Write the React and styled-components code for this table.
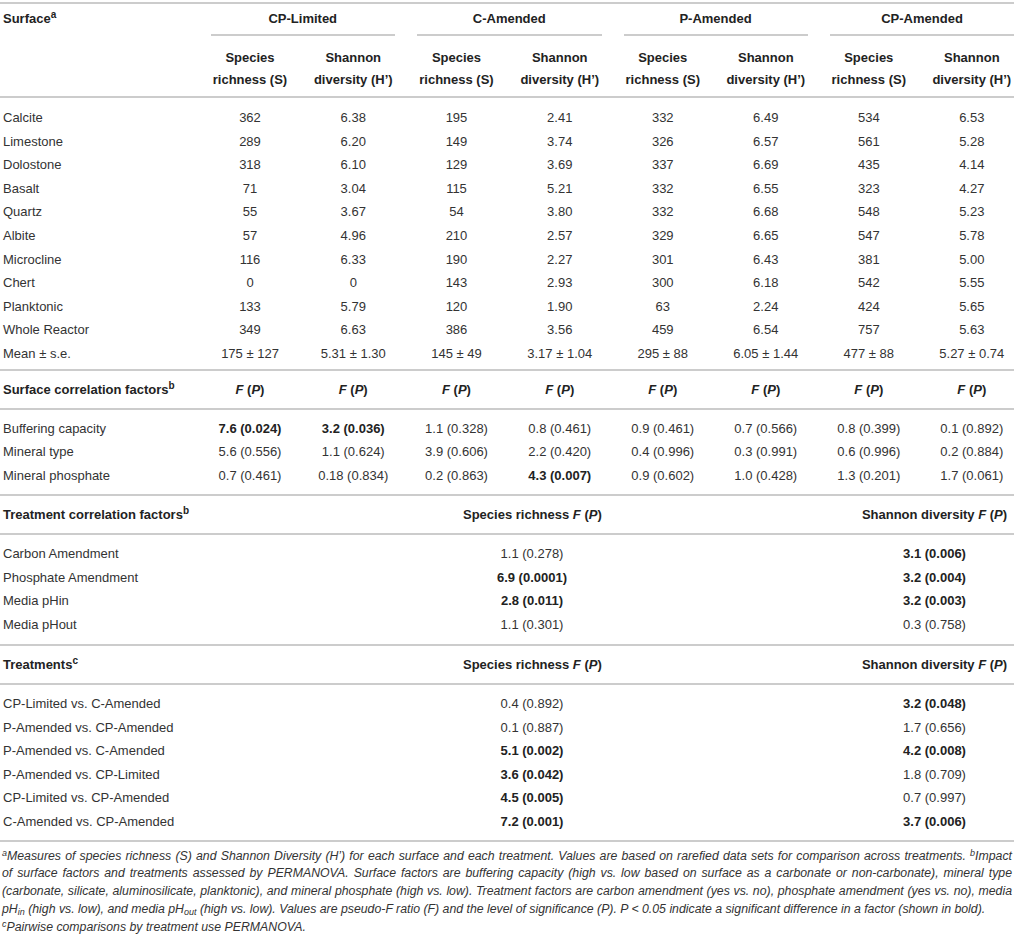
import React from "react";
import styled, { createGlobalStyle } from "styled-components";

const GlobalStyle = createGlobalStyle`
  html, body { margin: 0; padding: 0; background: #fff; }
  body {
    font-family: "Liberation Sans", Arial, Helvetica, sans-serif;
    color: #333;
    -webkit-font-smoothing: antialiased;
  }
`;

const LINE = "#cccccc";

const Page = styled.div`
  width: 1014px;
  padding-top: 2px;
`;

const Table = styled.table`
  width: 1014px;
  border-collapse: collapse;
  table-layout: fixed;
  border-top: 2px solid ${LINE};
  font-size: 13px;
`;

const GroupTh = styled.th`
  padding: 0 ${(p) => (p.$last ? 0 : 11)}px 0 11px;
  font-weight: bold;
  color: #222;
  text-align: center;
  vertical-align: top;
`;

const GroupLabel = styled.div`
  line-height: 16px;
  padding: 7px 0;
  border-bottom: 2px solid ${LINE};
`;

const CornerTh = styled.th`
  padding: 7px 0 0 3px;
  line-height: 16px;
  text-align: left;
  vertical-align: top;
  font-weight: bold;
  color: #222;
  border-bottom: 2px solid ${LINE};
`;

const SubTh = styled.th`
  padding: 11px ${(p) => (p.$last ? 1 : 11)}px 5px 11px;
  line-height: 22px;
  text-align: center;
  font-weight: bold;
  color: #222;
  border-bottom: 2px solid ${LINE};
`;

const Sup = styled.sup`
  font-size: 10px;
  line-height: 0;
  vertical-align: 5px;
  font-weight: bold;
`;

const SectionRow = styled.tr`
  border-bottom: 2px solid ${LINE};
  border-top: ${(p) => (p.$ruled ? `2px solid ${LINE}` : "none")};
`;

const SectionTh = styled.th`
  padding-top: 7px;
  padding-bottom: 6px;
  padding-right: ${(p) => (p.$last ? 1 : p.$label ? 0 : 11)}px;
  padding-left: ${(p) => (p.$padLeft != null ? p.$padLeft : p.$label ? 3 : 11)}px;
  line-height: 23.6px;
  text-align: ${(p) => (p.$label ? "left" : "center")};
  font-weight: bold;
  color: #222;
  white-space: nowrap;
`;

const Row = styled.tr`
  & > td {
    padding-top: ${(p) => p.$padTop || 0}px;
    padding-bottom: ${(p) => p.$padBottom || 0}px;
  }
`;

const Td = styled.td`
  padding-left: ${(p) => (p.$padLeft != null ? p.$padLeft : p.$label ? 3 : 11)}px;
  padding-right: ${(p) => (p.$last ? 1 : p.$label ? 0 : 11)}px;
  line-height: 23.6px;
  text-align: ${(p) => (p.$label ? "left" : "center")};
  font-weight: ${(p) => (p.$bold ? "bold" : "normal")};
  color: ${(p) => (p.$bold ? "#222" : "#333")};
  white-space: nowrap;
`;

const Bottom = styled.div`
  border-top: 2px solid ${LINE};
`;

const Footnotes = styled.div`
  padding: 6px 2px 0 2px;
  font-size: 12.3px;
  font-style: italic;
  line-height: 17.8px;
  color: #333;
`;

const Note = styled.p`
  margin: 0;
  text-align: justify;
`;

const NoteSup = styled.sup`
  font-size: 9px;
  line-height: 0;
  vertical-align: 4px;
`;

const Sub = styled.sub`
  font-size: 9px;
  line-height: 0;
  vertical-align: -2px;
`;

const surfaces = [
  ["Calcite", "362", "6.38", "195", "2.41", "332", "6.49", "534", "6.53"],
  ["Limestone", "289", "6.20", "149", "3.74", "326", "6.57", "561", "5.28"],
  ["Dolostone", "318", "6.10", "129", "3.69", "337", "6.69", "435", "4.14"],
  ["Basalt", "71", "3.04", "115", "5.21", "332", "6.55", "323", "4.27"],
  ["Quartz", "55", "3.67", "54", "3.80", "332", "6.68", "548", "5.23"],
  ["Albite", "57", "4.96", "210", "2.57", "329", "6.65", "547", "5.78"],
  ["Microcline", "116", "6.33", "190", "2.27", "301", "6.43", "381", "5.00"],
  ["Chert", "0", "0", "143", "2.93", "300", "6.18", "542", "5.55"],
  ["Planktonic", "133", "5.79", "120", "1.90", "63", "2.24", "424", "5.65"],
  ["Whole Reactor", "349", "6.63", "386", "3.56", "459", "6.54", "757", "5.63"],
  ["Mean \u00b1 s.e.", "175 \u00b1 127", "5.31 \u00b1 1.30", "145 \u00b1 49", "3.17 \u00b1 1.04", "295 \u00b1 88", "6.05 \u00b1 1.44", "477 \u00b1 88", "5.27 \u00b1 0.74"],
];

const surfaceFactors = [
  ["Buffering capacity", [["7.6 (0.024)", 1], ["3.2 (0.036)", 1], ["1.1 (0.328)"], ["0.8 (0.461)"], ["0.9 (0.461)"], ["0.7 (0.566)"], ["0.8 (0.399)"], ["0.1 (0.892)"]]],
  ["Mineral type", [["5.6 (0.556)"], ["1.1 (0.624)"], ["3.9 (0.606)"], ["2.2 (0.420)"], ["0.4 (0.996)"], ["0.3 (0.991)"], ["0.6 (0.996)"], ["0.2 (0.884)"]]],
  ["Mineral phosphate", [["0.7 (0.461)"], ["0.18 (0.834)"], ["0.2 (0.863)"], ["4.3 (0.007)", 1], ["0.9 (0.602)"], ["1.0 (0.428)"], ["1.3 (0.201)"], ["1.7 (0.061)"]]],
];

const treatmentFactors = [
  ["Carbon Amendment", ["1.1 (0.278)"], ["3.1 (0.006)", 1]],
  ["Phosphate Amendment", ["6.9 (0.0001)", 1], ["3.2 (0.004)", 1]],
  ["Media pHin", ["2.8 (0.011)", 1], ["3.2 (0.003)", 1]],
  ["Media pHout", ["1.1 (0.301)"], ["0.3 (0.758)"]],
];

const treatments = [
  ["CP-Limited vs. C-Amended", ["0.4 (0.892)"], ["3.2 (0.048)", 1]],
  ["P-Amended vs. CP-Amended", ["0.1 (0.887)"], ["1.7 (0.656)"]],
  ["P-Amended vs. C-Amended", ["5.1 (0.002)", 1], ["4.2 (0.008)", 1]],
  ["P-Amended vs. CP-Limited", ["3.6 (0.042)", 1], ["1.8 (0.709)"]],
  ["CP-Limited vs. CP-Amended", ["4.5 (0.005)", 1], ["0.7 (0.997)"]],
  ["C-Amended vs. CP-Amended", ["7.2 (0.001)", 1], ["3.7 (0.006)", 1]],
];

const groups = ["CP-Limited", "C-Amended", "P-Amended", "CP-Amended"];
const mainCols = [199.5, 101, 105.5, 101, 105.5, 100.5, 105.5, 100.5, 95.5];
const sideCols = [452, 160, 402];

const FP = () => (
  <>
    <i>F</i> (<i>P</i>)
  </>
);

function padFor(i, n, top, bottom) {
  return { $padTop: i === 0 ? top : 0, $padBottom: i === n - 1 ? bottom : 0 };
}

function MainTable() {
  return (
    <Table>
      <colgroup>
        {mainCols.map((w, i) => (
          <col key={i} style={{ width: w }} />
        ))}
      </colgroup>
      <thead>
        <tr>
          <CornerTh rowSpan={2}>
            Surface<Sup>a</Sup>
          </CornerTh>
          {groups.map((g, i) => (
            <GroupTh key={g} colSpan={2} $last={i === groups.length - 1}>
              <GroupLabel>{g}</GroupLabel>
            </GroupTh>
          ))}
        </tr>
        <tr>
          {groups.map((g, i) => (
            <React.Fragment key={g}>
              <SubTh>
                Species
                <br />
                richness (S)
              </SubTh>
              <SubTh $last={i === groups.length - 1}>
                Shannon
                <br />
                diversity (H’)
              </SubTh>
            </React.Fragment>
          ))}
        </tr>
      </thead>
      <tbody>
        {surfaces.map((r, i) => (
          <Row key={r[0]} {...padFor(i, surfaces.length, 8, 3.5)}>
            <Td $label>{r[0]}</Td>
            {r.slice(1).map((v, j) => (
              <Td key={j} $last={j === 7}>
                {v}
              </Td>
            ))}
          </Row>
        ))}
      </tbody>
      <tbody>
        <SectionRow $ruled>
          <SectionTh $label>
            Surface correlation factors<Sup>b</Sup>
          </SectionTh>
          {Array.from({ length: 8 }).map((_, j) => (
            <SectionTh key={j} $last={j === 7}>
              <FP />
            </SectionTh>
          ))}
        </SectionRow>
        {surfaceFactors.map(([label, vals], i) => (
          <Row key={label} {...padFor(i, surfaceFactors.length, 7, 7)}>
            <Td $label>{label}</Td>
            {vals.map(([v, b], j) => (
              <Td key={j} $bold={!!b} $last={j === 7}>
                {v}
              </Td>
            ))}
          </Row>
        ))}
      </tbody>
    </Table>
  );
}

function SideTable({ title, sup, rows, bottom }) {
  return (
    <Table>
      <colgroup>
        {sideCols.map((w, i) => (
          <col key={i} style={{ width: w }} />
        ))}
      </colgroup>
      <thead>
        <SectionRow>
          <SectionTh $label>
            {title}
            <Sup>{sup}</Sup>
          </SectionTh>
          <SectionTh>
            Species richness <FP />
          </SectionTh>
          <SectionTh $last $padLeft={244}>
            Shannon diversity <FP />
          </SectionTh>
        </SectionRow>
      </thead>
      <tbody>
        {rows.map(([label, a, b], i) => (
          <Row key={label} {...padFor(i, rows.length, 7, bottom)}>
            <Td $label>{label}</Td>
            <Td $bold={!!a[1]}>{a[0]}</Td>
            <Td $bold={!!b[1]} $last $padLeft={244}>
              {b[0]}
            </Td>
          </Row>
        ))}
      </tbody>
    </Table>
  );
}

export default function App() {
  return (
    <Page>
      <GlobalStyle />
      <MainTable />
      <SideTable title="Treatment correlation factors" sup="b" rows={treatmentFactors} bottom={8} />
      <SideTable title="Treatments" sup="c" rows={treatments} bottom={6} />
      <Bottom>
        <Footnotes>
          <Note>
            <NoteSup>a</NoteSup>Measures of species richness (S) and Shannon Diversity (H’) for each surface and
            each treatment. Values are based on rarefied data sets for comparison across treatments.{" "}
            <NoteSup>b</NoteSup>Impact of{"\u00a0"}surface factors and treatments assessed by PERMANOVA. Surface
            factors are buffering capacity (high vs. low based on surface as a carbonate or non-carbonate), mineral
            type (carbonate, silicate, aluminosilicate, planktonic), and mineral phosphate (high vs. low). Treatment
            factors are carbon amendment (yes vs. no), phosphate amendment (yes vs. no), media pH<Sub>in</Sub> (high
            vs. low), and media pH<Sub>out</Sub> (high vs. low). Values are pseudo-F ratio (F) and the level of
            significance (P). P &lt; 0.05 indicate a significant difference in a factor (shown in bold).
          </Note>
          <Note>
            <NoteSup>c</NoteSup>Pairwise comparisons by treatment use PERMANOVA.
          </Note>
        </Footnotes>
      </Bottom>
    </Page>
  );
}
